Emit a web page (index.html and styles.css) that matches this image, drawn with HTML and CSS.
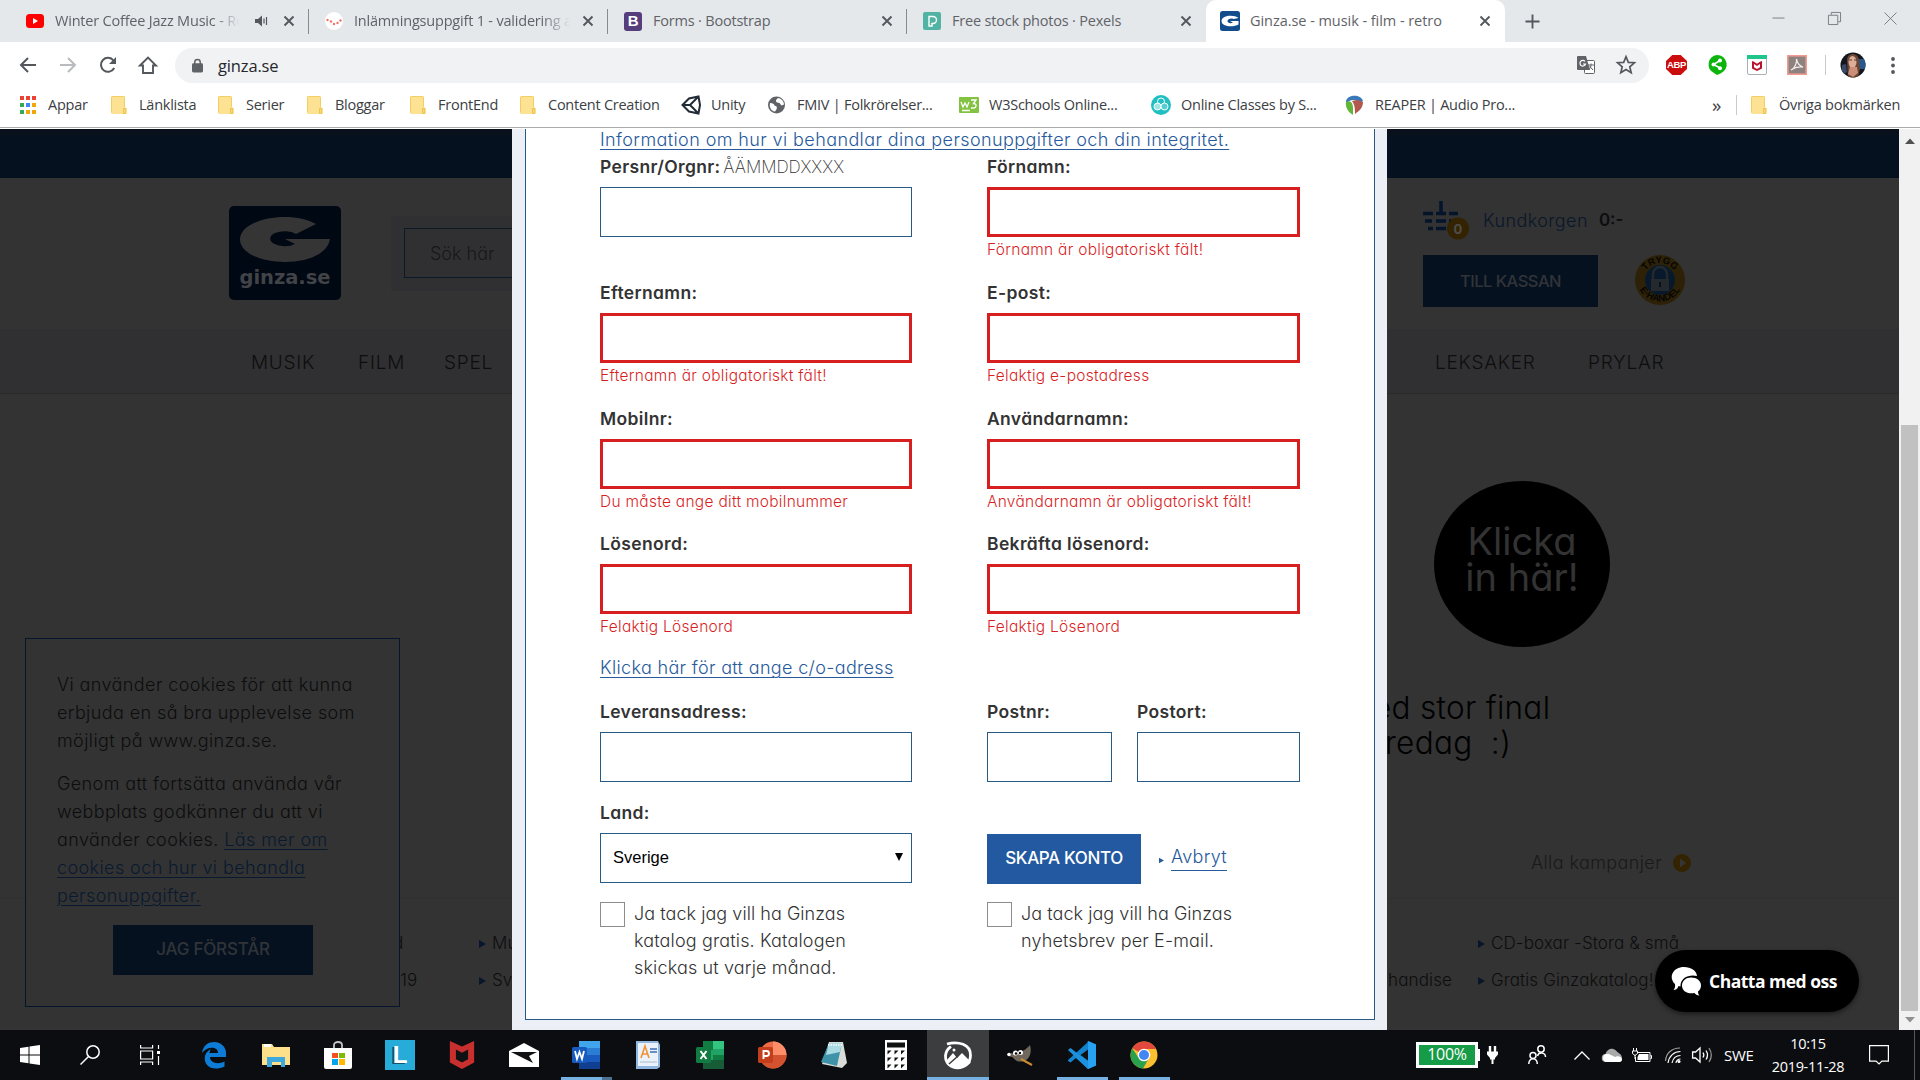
FILE: index.html
```html
<!DOCTYPE html>
<html lang="sv">
<head>
<meta charset="utf-8">
<title>Ginza.se - musik - film - retro</title>
<link rel="stylesheet" href="styles.css">
</head>
<body>
<svg class="defs" width="0" height="0">
  <symbol id="folder" viewBox="0 0 16 18"><path d="M1.5 0h11a1.5 1.5 0 0 1 1.500 1.500V11l1.500 1v4.500a1.500 1.500 0 0 1-1.500 1.500H1.500A1.500 1.500 0 0 1 0 16.500v-15A1.500 1.500 0 0 1 1.500 0z" fill="#fde293"/><path d="M.5 16.500V1.500a1 1 0 0 1 1-1h11a1 1 0 0 1 1 1V11" fill="none" stroke="#f3cf63"/><path d="M12.500 17.500v-5h2.500v5z" fill="#f9d86f" stroke="#e8bf45" stroke-width=".8"/></symbol>
  <symbol id="x" viewBox="0 0 12 12"><path d="M1.500 1.500l9 9M10.500 1.500l-9 9" stroke="#54585d" stroke-width="1.900"/></symbol>
  <symbol id="tri" viewBox="0 0 7 8"><path d="M0 0l7 4-7 4z" fill="currentColor"/></symbol>
</svg>

<header class="tabs">
  <div class="tab">
    <svg class="fav" viewBox="0 0 18 18"><rect y="2" width="18" height="14" rx="3.500" fill="#f00"/><path d="M7 6l5 3-5 3z" fill="#fff"/></svg>
    <span class="title fade">Winter Coffee Jazz Music - Re</span>
    <svg class="audio" viewBox="0 0 14 12"><path d="M0 4h3l4-3.500v11L3 8H0z" fill="#54585d"/><path d="M9 3.500v5M11.500 2v8" stroke="#54585d" stroke-width="1.200"/></svg>
    <svg class="close"><use href="#x"/></svg>
  </div>
  <div class="tab">
    <svg class="fav" viewBox="0 0 18 18"><circle cx="9" cy="9" r="9" fill="#fff"/><g fill="#f0736a"><circle cx="2.500" cy="8" r="1.200"/><circle cx="6" cy="9.500" r="1.200"/><circle cx="9" cy="12" r="1.200"/><circle cx="12.500" cy="11" r="1.200"/><circle cx="15.500" cy="8.500" r="1.200"/></g></svg>
    <span class="title fade">Inlämningsuppgift 1 - validering a</span>
    <svg class="close"><use href="#x"/></svg>
  </div>
  <div class="tab">
    <span class="fav boot">B</span>
    <span class="title">Forms · Bootstrap</span>
    <svg class="close"><use href="#x"/></svg>
  </div>
  <div class="tab last">
    <svg class="fav" viewBox="0 0 18 18"><rect width="18" height="18" rx="2" fill="#51b3a3"/><path d="M6 14V4.500h4a3 3 0 0 1 0 7H9V14z" fill="none" stroke="#fff" stroke-width="1.400"/></svg>
    <span class="title">Free stock photos · Pexels</span>
    <svg class="close"><use href="#x"/></svg>
  </div>
  <div class="tab active">
    <svg class="fav" viewBox="0 0 20 20"><rect width="20" height="20" rx="2.500" fill="#124c8c"/><path d="M18.500 7C14 3.500 2 4 1.500 10c0 6 12 6.500 17 3.500V10H10l3 1.500c-2.500 1.500-5.500.5-5.500-1.500s3.500-3 6-2z" fill="#fff"/></svg>
    <span class="title">Ginza.se - musik - film - retro</span>
    <svg class="close"><use href="#x"/></svg>
  </div>
  <svg class="newtab" viewBox="0 0 16 16"><path d="M8 .5v15M.5 8h15" stroke="#54585d" stroke-width="2"/></svg>
  <div class="winbtns">
    <svg viewBox="0 0 14 14"><path d="M.5 6.500h13" stroke="#75797d"/></svg>
    <svg viewBox="0 0 14 14"><path d="M.5 3.500h10v10H.5zM3.500 3V.5h10v10H11" fill="none" stroke="#75797d"/></svg>
    <svg viewBox="0 0 14 14"><path d="M.5.5l13 13M13.500.5l-13 13" stroke="#75797d"/></svg>
  </div>
</header>

<nav class="toolbar">
  <svg viewBox="0 0 18 18"><path d="M17 9H2M9 2L2 9l7 7" fill="none" stroke="#54585d" stroke-width="2"/></svg>
  <svg viewBox="0 0 18 18"><path d="M1 9h15M9 2l7 7-7 7" fill="none" stroke="#b9bbbe" stroke-width="2"/></svg>
  <svg viewBox="0 0 18 18"><path d="M15.200 12A7 7 0 1 1 14.500 4.500" fill="none" stroke="#54585d" stroke-width="2"/><path d="M17 1v7h-7z" fill="#54585d"/></svg>
  <svg viewBox="0 0 18 18"><path d="M1 9.500L9 1.500l8 8H14V17H4V9.500z" fill="none" stroke="#54585d" stroke-width="1.900"/></svg>
  <div class="omnibox">
    <svg class="lock" viewBox="0 0 12 15"><rect y="5" width="12" height="10" rx="1.500" fill="#5f6368"/><path d="M3 6V4a3 3 0 0 1 6 0v2" fill="none" stroke="#5f6368" stroke-width="1.600"/></svg>
    <span class="url">ginza.se</span>
    <svg class="tr" viewBox="0 0 18 18"><rect x="7.500" y="4.500" width="10" height="13" rx="1" fill="#fff" stroke="#5f6368"/><path d="M1 0h8l4 14H1a1 1 0 0 1-1-1V1a1 1 0 0 1 1-1z" fill="#5f6368"/><path d="M8 5.500A2.800 2.800 0 1 0 8.500 8H6" fill="none" stroke="#fff" stroke-width="1.200"/><path d="M11 9h6M14 7.500V9c0 2-1.500 4-2.500 5M12.500 10l3.500 4" stroke="#5f6368" fill="none"/></svg>
    <svg class="star" viewBox="0 0 18 18"><path d="M9 1.500l2.100 5.100 5.500.4-4.200 3.600 1.300 5.400L9 13.100 4.300 16l1.300-5.400L1.400 7l5.500-.4z" fill="none" stroke="#54585d" stroke-width="1.500"/></svg>
  </div>
  <div class="exts">
    <span class="abp">ABP</span>
    <svg viewBox="0 0 20 20"><path d="M10 0a9.500 9.500 0 0 1 4 18.200L10 20l-3-2A9.500 9.500 0 0 1 10 0z" fill="#0db40d"/><path d="M13 5.500L6.500 9.500 13 13" fill="none" stroke="#fff" stroke-width="1.500"/><g fill="#fff"><circle cx="13" cy="5.500" r="2"/><circle cx="6.500" cy="9.500" r="2"/><circle cx="13" cy="13.200" r="2"/></g></svg>
    <svg viewBox="0 0 20 20"><rect x=".5" y=".5" width="19" height="19" rx="1.500" fill="#fff" stroke="#a9b0b3"/><path d="M0 0h20v4H0z" fill="#1fc58a"/><path d="M5 6l2 .8v5.500l3 1.700 3-1.700V6.800L15 6v7.500L10 16l-5-2.500z" fill="#b8142c"/><path d="M7 6.800l3 2 3-2V9l-3 2-3-2z" fill="#b8142c"/></svg>
    <svg viewBox="0 0 20 20"><rect x=".8" y=".8" width="18.400" height="18.400" fill="#8c8280" stroke="#f09a90" stroke-width="1.600"/><path d="M4 15c4-2 6-7 5.500-11 1 5 3 7 6.500 8-5-.5-8 0-12 3z" fill="none" stroke="#f2e7e5" stroke-width="1.300"/></svg>
  </div>
  <i class="vsep"></i>
  <svg class="avatar" viewBox="0 0 26 26"><clipPath id="av"><circle cx="13" cy="13" r="12.500"/></clipPath><g clip-path="url(#av)"><path d="M0 0h26v26H0z" fill="#14171d"/><path d="M18 7h8v10h-7z" fill="#27588e"/><path d="M7 8c0-8 11-8 12 0l1 8-2 10H8z" fill="#6b4634"/><ellipse cx="12.500" cy="10" rx="4" ry="6" fill="#dcae98"/><path d="M9 8h3M14 8h3" stroke="#5b3a2c"/><path d="M10 15h7l1 6-5 4-5-3z" fill="#c98f78"/><path d="M2 13l4-1 1 8-5 3z" fill="#394a68"/></g></svg>
  <svg class="dots" viewBox="0 0 6 18"><g fill="#54585d"><circle cx="3" cy="2.500" r="1.900"/><circle cx="3" cy="9" r="1.900"/><circle cx="3" cy="15.500" r="1.900"/></g></svg>
</nav>

<nav class="bookmarks">
  <a><svg viewBox="0 0 16 18"><g><path d="M0 0h4v4H0zM6 0h4v4H6zM12 0h4v4h-4z" fill="#ea4335"/><path d="M0 7h4v4H0z" fill="#34a853"/><path d="M6 7h4v4H6z" fill="#4285f4"/><path d="M12 7h4v4h-4zM12 14h4v4h-4zM6 14h4v4H6z" fill="#f2a60c"/><path d="M0 14h4v4H0z" fill="#34a853"/></g></svg>Appar</a>
  <a><svg><use href="#folder"/></svg>Länklista</a>
  <a><svg><use href="#folder"/></svg>Serier</a>
  <a><svg><use href="#folder"/></svg>Bloggar</a>
  <a><svg><use href="#folder"/></svg>FrontEnd</a>
  <a><svg><use href="#folder"/></svg>Content Creation</a>
  <a class="wide"><svg viewBox="0 0 20 20"><path d="M1.500 10L8 3.500 17.500 1.500 19 10l-1.500 8.500L8 16.500zM9 10H1.500M9 10l7.500-7.500M9 10l7.500 7.500" fill="none" stroke="#222c37" stroke-width="2"/></svg>Unity</a>
  <a class="wide"><svg viewBox="0 0 20 20"><circle cx="9.500" cy="10" r="8.500" fill="#5f6368"/><path d="M3 8c3 0 4 1 5 3 2 0 3 2 0 5.500C4 16 2 12 3 8zM11 3c-2 1.500-3 3-1 4.500l2.500.5 2 2.500 2.500-1c0-3-2.500-6-6-6.500z" fill="#fff"/></svg>FMIV | Folkrörelser...</a>
  <a class="wide"><svg viewBox="0 0 20 20"><rect y="2" width="20" height="16" rx="1" fill="#83c341"/><path d="M2 7l2 5 2-4 2 4 2-5M12 5h5l-2.500 3.500c4 0 3 5-.5 4.500h-2M3 15.500h8" fill="none" stroke="#fff" stroke-width="1.300"/></svg>W3Schools Online...</a>
  <a class="wide"><svg viewBox="0 0 20 20"><circle cx="10" cy="10" r="10" fill="#21bfc2"/><g fill="none" stroke="#fff" stroke-width="1"><circle cx="10" cy="6.500" r="3.500" fill="#21bfc2"/><circle cx="6.500" cy="11.500" r="3.500" fill="#9fe5e6"/><circle cx="13.500" cy="11.500" r="3.500" fill="#55d0d2"/></g></svg>Online Classes by S...</a>
  <a class="wide"><svg viewBox="0 0 20 20"><path d="M1 6c2-7 15-7 17 0l-4 2C11 4 6 4 1 8z" fill="#3a78b8"/><path d="M1 7c4-2 7 1 7 6v7C3 17 0 12 1 7z" fill="#62b53a"/><path d="M7 6c4-1 8-1 11 1 0 6-4 9-8 12 0-5 0-9-3-13z" fill="#b2584e"/></svg>REAPER | Audio Pro...</a>
  <span class="more">»</span>
  <a><svg><use href="#folder"/></svg>Övriga bokmärken</a>
</nav>

<div class="view">
  <main class="page">
    <div class="topbar"></div>
    <div class="head">
      <svg class="logo" viewBox="0 0 112 94"><rect width="112" height="94" rx="5" fill="#000814"/><path d="M87 18L67 28A14.500 7.500 0 1 0 66 38L56 33H101C99 47 80 56 56 56 30 56 11 46 11 33.500S30 11 56 11C68 11 79 13.500 87 18z" fill="#353535"/><text x="10.500" y="78" textLength="91" class="logotext">ginza.se</text></svg>
      <div class="search"><div class="searchbox">Sök här</div></div>
      <div class="cart">
        <div class="cartrow">
          <svg class="basket" viewBox="0 0 48 40"><g stroke="#04142b" stroke-width="3.500" fill="none"><path d="M18 0v12M0 12.500h10M13 12.500h10M26 12.500h9M2 20h7M13 20h10M26 20h8M5 27.500h5M13 27.500h10M26 27.500h5"/></g><circle cx="35" cy="27.500" r="11" fill="#342300"/><text x="35" y="32.500" class="badge">0</text></svg>
          <span class="basketname">Kundkorgen</span><b>0:-</b>
        </div>
        <div class="cartrow two">
          <div class="kassan">TILL KASSAN</div>
          <svg class="seal" viewBox="0 0 50 50"><defs><path id="arcTop" d="M8 25a17 17 0 0 1 34 0"/><path id="arcBot" d="M1.500 23a23.500 23.500 0 0 0 47 0"/></defs><circle cx="25" cy="25" r="25" fill="#2d2207"/><circle cx="25" cy="25" r="15" fill="#07192b"/><text class="sealtext"><textPath href="#arcTop" startOffset="50%">TRYGG</textPath></text><text class="sealtext"><textPath href="#arcBot" startOffset="50%">E·HANDEL</textPath></text><path d="M16 24h18v12H16z" fill="#24292d"/><path d="M18 24v-5a7 7 0 0 1 14 0v5" fill="none" stroke="#24292d" stroke-width="2.500"/><path d="M25 27v5" stroke="#07101a" stroke-width="2"/></svg>
        </div>
      </div>
    </div>
    <div class="menu"><span>MUSIK</span><span>FILM</span><span>SPEL</span><span class="leks">LEKSAKER</span><span>PRYLAR</span></div>
    <div class="promo">
      <div class="disc"><span class="k1">Klicka</span><span class="k2">in här!</span></div>
      <div class="final"><span class="f1">ed stor final</span><span class="f2">redag&nbsp; :)</span></div>
      <div class="kamp">Alla kampanjer<svg viewBox="0 0 18 18"><circle cx="9" cy="9" r="9" fill="#342300"/><path d="M7 4.500l6 4.500-6 4.500z" fill="#353535"/></svg></div>
    </div>
    <div class="links">
      <span class="t">d</span><span><svg><use href="#tri"/></svg>Mu</span><span></span><span class="g"><svg><use href="#tri"/></svg>CD-boxar -Stora &amp; små</span>
      <span class="t">2019</span><span><svg><use href="#tri"/></svg>Sve</span><span class="r">handise</span><span class="h"><svg><use href="#tri"/></svg>Gratis Ginzakatalog!</span>
    </div>
  </main>

  <aside class="cookie">
    <p>Vi använder cookies för att kunna<br>erbjuda en så bra upplevelse som<br>möjligt på www.ginza.se.</p>
    <p>Genom att fortsätta använda vår<br>webbplats godkänner du att vi<br>använder cookies. <u>Läs mer om<br>cookies och hur vi behandla<br>personuppgifter.</u></p>
    <div class="ok">JAG FÖRSTÅR</div>
  </aside>

  <section class="modal">
    <form class="panel">
      <a class="link top">Information om hur vi behandlar dina personuppgifter och din integritet.</a>
      <div class="grid">
        <div class="field"><label>Persnr/Orgnr: <em>ÅÄMMDDXXXX</em></label><div class="input"></div></div>
        <div class="field bad"><label>Förnamn:</label><div class="input"></div><p>Förnamn är obligatoriskt fält!</p></div>
        <div class="field bad"><label>Efternamn:</label><div class="input"></div><p>Efternamn är obligatoriskt fält!</p></div>
        <div class="field bad"><label>E-post:</label><div class="input"></div><p>Felaktig e-postadress</p></div>
        <div class="field bad"><label>Mobilnr:</label><div class="input"></div><p>Du måste ange ditt mobilnummer</p></div>
        <div class="field bad"><label>Användarnamn:</label><div class="input"></div><p>Användarnamn är obligatoriskt fält!</p></div>
        <div class="field bad"><label>Lösenord:</label><div class="input"></div><p>Felaktig Lösenord</p></div>
        <div class="field bad"><label>Bekräfta lösenord:</label><div class="input"></div><p>Felaktig Lösenord</p></div>
      </div>
      <a class="link co">Klicka här för att ange c/o-adress</a>
      <div class="grid low">
        <div class="field"><label>Leveransadress:</label><div class="input"></div></div>
        <div class="post">
          <div class="field"><label>Postnr:</label><div class="input"></div></div>
          <div class="field"><label>Postort:</label><div class="input"></div></div>
        </div>
        <div class="field"><label>Land:</label><div class="input select"><span>Sverige</span><svg viewBox="0 0 8 8"><path d="M0 0h8L4 8z"/></svg></div></div>
        <div class="actions"><div class="create">SKAPA KONTO</div><svg><use href="#tri"/></svg><a>Avbryt</a></div>
      </div>
      <div class="grid">
        <div class="check"><i></i><span>Ja tack jag vill ha Ginzas<br>katalog gratis. Katalogen<br>skickas ut varje månad.</span></div>
        <div class="check"><i></i><span>Ja tack jag vill ha Ginzas<br>nyhetsbrev per E-mail.</span></div>
      </div>
    </form>
  </section>

  <div class="chat"><svg viewBox="0 0 30 29"><path d="M13 0c7 0 12.500 3.500 13 9-8-2-17 2-16.500 10.500l-2-.5c-1 3-3 4-5 4 1-1 2-3 1.500-6C-3 10 2 0 13 0z" fill="#fff"/><path d="M20 10.500c6 0 10 3.500 10 8 0 3-1.500 5-3 6 0 2 .5 3 1.500 4-2.500 0-4-1-5-2.500-7 1.500-12.500-2-12.500-7.500 0-4.500 4-8 9-8z" fill="#fff"/></svg>Chatta med oss</div>

  <div class="scroll"><svg viewBox="0 0 10 6"><path d="M0 6l5-5.500L10 6z" fill="#505050"/></svg><i></i><svg viewBox="0 0 10 6"><path d="M0 0l5 5.500L10 0z" fill="#8f8f8f"/></svg></div>
</div>

<footer class="taskbar">
  <div class="apps">
    <span><svg viewBox="0 0 20 20"><path d="M0 3l8.500-1.300v7.800H0zM9.500 1.500L20 0v9.500H9.500zM0 10.500h8.500v7.800L0 17zM9.500 10.500H20V20L9.500 18.500z" fill="#fff"/></svg></span>
    <span><svg viewBox="0 0 20 20"><circle cx="13" cy="7" r="6.200" fill="none" stroke="#fff" stroke-width="1.500"/><path d="M8.500 11.500L.5 19.500" stroke="#fff" stroke-width="1.500"/></svg></span>
    <span><svg class="tview" viewBox="0 0 20 20"><path d="M.6 0v3h12V0M.6 6h12v8H.6zM.6 20v-3h12v3M18.500 0v4M18.500 11v9" fill="none" stroke="#fff" stroke-width="1.200"/><path d="M17 6h3v3h-3z" fill="#fff"/></svg></span>
    <span><svg class="big" viewBox="0 0 28 28"><path d="M2 12C3 4 9 1 14 1c8 0 12 6 12 11v4H10c0 6 8 8 14.500 4.500v5C13 31 3 25 5 15c1-4 4-6 6-7-1 1-1.500 3-1.500 4H18c0-7-11-7-16 0z" fill="#0c7cd6"/></svg></span>
    <span><svg class="big" viewBox="0 0 28 28"><path d="M0 3h10l2 3h16v18H0z" fill="#ffe08a"/><path d="M2 3h7v3H2z" fill="#fff"/><path d="M5 26V16h18v10h-4v-5h-9v5z" fill="#3fa9dd"/></svg></span>
    <span><svg class="big" viewBox="0 0 28 28"><path d="M10 8V4c0-4 8-4 8 0v4" fill="none" stroke="#bfc3c9" stroke-width="1.800"/><path d="M0 7h28v19a2 2 0 0 1-2 2H2a2 2 0 0 1-2-2z" fill="#fff"/><path d="M8 12h6v5H8z" fill="#f25022"/><path d="M15 12h6v5h-6z" fill="#7fba00"/><path d="M8 18h6v6H8z" fill="#00a4ef"/><path d="M15 18h6v6h-6z" fill="#ffb900"/></svg></span>
    <span><i class="lapp">L</i></span>
    <span><svg class="big" viewBox="0 0 28 30"><path d="M1 0l13 6L27 0v23l-13 7-13-7z" fill="#c8302f"/><path d="M7.500 9l6.500 3.500L20.500 9v10.500L14 23l-6.500-3.500z" fill="#101113"/></svg></span>
    <span><svg class="mail" viewBox="0 0 30 24"><path d="M0 8L15 0l15 8v16H0z" fill="#fff"/><path d="M2 9h26l-8 4 4 7L2 9z" fill="#101113"/></svg></span>
    <span class="run part"><svg class="big" viewBox="0 0 28 28"><path d="M7 0h19a2 2 0 0 1 2 2v24a2 2 0 0 1-2 2H7z" fill="#2b7cd3"/><path d="M7 0h21v7H7z" fill="#41a5ee"/><path d="M7 14h21v7H7z" fill="#185abd"/><path d="M7 21h21v7H7z" fill="#103f91"/><rect y="6" width="15" height="16" rx="1.500" fill="#185abd"/><path d="M3 10l2 8 2.500-7 2.500 7 2-8" fill="none" stroke="#fff" stroke-width="1.800"/></svg></span>
    <span><svg class="big" viewBox="0 0 28 28"><path d="M2 0h22l2 4v22l-3 2H2z" fill="#8fb7e0"/><path d="M4 2h20v23H4z" fill="#eaf3fb"/><path d="M7 17l4-12 4 12M8.500 13h5" fill="none" stroke="#f29232" stroke-width="1.600"/><path d="M16 8h7M16 11h7" stroke="#3c6fb5" stroke-width="1.500"/><path d="M6 21h17" stroke="#a8bacb"/></svg></span>
    <span><svg class="big" viewBox="0 0 28 28"><path d="M7 0h21v28H7z" fill="#21a366"/><path d="M7 0h10v9H7zM17 14h11v7H17z" fill="#107c41"/><path d="M17 0h11v8H17z" fill="#33c481"/><path d="M7 19h21v9H7z" fill="#185c37"/><rect y="6" width="15" height="16" rx="1.500" fill="#107c41"/><path d="M4.500 10l6 8M10.500 10l-6 8" stroke="#fff" stroke-width="2"/></svg></span>
    <span><svg class="big" viewBox="0 0 28 28"><circle cx="15" cy="14" r="13.500" fill="#ed6c47"/><path d="M15 .5A13.500 13.500 0 0 1 28.500 14H15z" fill="#ff8f6b"/><path d="M1.500 14h27a13.500 13.500 0 0 1-27 0z" fill="#d35230"/><rect y="6" width="15" height="16" rx="1.500" fill="#c43e1c"/><path d="M5.500 18v-8h3a2.500 2.500 0 0 1 0 5h-3" fill="none" stroke="#fff" stroke-width="1.900"/></svg></span>
    <span><svg class="big" viewBox="0 0 28 28"><path d="M9 1h14l4 21-5 5-20-4z" fill="#d9dcd8"/><path d="M9 2h13l-5 23L1 21z" fill="#3f93a9"/><path d="M9 2h13l-2 9-14 3z" fill="#a9dbe3"/><path d="M8 4h14" stroke="#e9f3f4" stroke-width="2" stroke-dasharray="1.500 1"/></svg></span>
    <span><svg class="calc" viewBox="0 0 22 30"><path d="M0 0h22v30H0z" fill="#fff"/><path d="M2 2.500h18v5H2z" fill="#101113"/><g fill="#101113"><path d="M2.500 10.500h4l-4 4zM9.500 10.500h4l-4 4zM16 10.500h4l-4 4zM2.500 17.500h4l-4 4zM9.500 17.500h4l-4 4zM16 17.500h4l-4 4zM2.500 24.500h4l-4 4zM9.500 24.500h4l-4 4zM16 24.500h4l-4 4z"/></g></svg></span>
    <span class="current"><svg class="big" viewBox="0 0 28 28"><path d="M3 3C14 0 27 3 26.500 14.500 26 31 1 31 1.500 14.500 2 9 5 7 7 5.500" fill="none" stroke="#fff" stroke-width="2.800"/><path d="M3 19l6-7 4 5 5-5 9 9c-6 9-20 7-24-2z" fill="#fff"/><path d="M5 23l9-8" stroke="#3c3d3f" stroke-width="1.500"/><circle cx="10" cy="9" r="1.500" fill="#fff"/></svg></span>
    <span><svg class="big" viewBox="0 0 28 28"><path d="M24 4c2 7 0 14-6 16-4 1.500-9 0-11-3.500L3 15l2-3c6 1 13-1 19-8z" fill="#6f675c"/><circle cx="9.500" cy="12" r="2.500" fill="#fff"/><circle cx="14.500" cy="11.500" r="2.500" fill="#fff"/><circle cx="10" cy="12.500" r="1.200"/><circle cx="14" cy="12" r="1.200"/><circle cx="3" cy="13.500" r="1.800" fill="#fff"/><path d="M15 18l11 6" stroke="#c98c2f" stroke-width="2"/></svg></span>
    <span class="run"><svg class="big" viewBox="0 0 28 28"><path d="M20 0l8 3.500v21L20 28 8 17l-5.500 4.500L0 20V19L19 2z" fill="#1284cf"/><path d="M20 0l8 3.500v21L20 28z" fill="#27a2f0"/><path d="M0 9l2.500-2L20 20.500V28z" fill="#1c92dd"/><path d="M20 8.500v11L12.500 14z" fill="#101113"/><path d="M0 10.500V17.500L4.500 14z" fill="#101113"/></svg></span>
    <span class="run"><svg class="big" viewBox="0 0 28 28"><circle cx="14" cy="14" r="13.500" fill="#fbc02f"/><path d="M14 14L2.300 7.200A13.500 13.500 0 0 1 25.700 7.300L26 8H14z" fill="#e2483c"/><path d="M2.300 7.200A13.500 13.500 0 0 0 13 27.500l6-10.500L14 14 8 16z" fill="#2aa14c"/><circle cx="14" cy="14" r="6.300" fill="#fff"/><circle cx="14" cy="14" r="5" fill="#4486f4"/></svg></span>
  </div>
  <div class="tray">
    <div class="batt">100%</div>
    <svg class="plug" viewBox="0 0 11 18"><path d="M3 0v6M8 0v6" stroke="#fff" stroke-width="2.400"/><path d="M0 5.500h11v3L8 12v1.500H3V12L0 8.500z" fill="#fff"/><path d="M5.500 12v6" stroke="#fff" stroke-width="2"/></svg>
    <svg class="people" viewBox="0 0 18 20"><g fill="none" stroke="#fff" stroke-width="1.500"><circle cx="13" cy="4" r="3.200"/><circle cx="5" cy="10.500" r="3"/><path d="M.8 19c0-7 8.500-7 8.500 0M9.500 11c1-4 8-4 8 1"/></g></svg>
    <svg class="chev" viewBox="0 0 16 9"><path d="M.5 8.500L8 1l7.500 7.500" fill="none" stroke="#fff" stroke-width="1.300"/></svg>
    <svg class="cloud" viewBox="0 0 20 14"><path d="M4 14a4 4 0 0 1-.5-8C5 1 10-1 14 2.500 16 5 20 6 20 10s-3 4-4 4z" fill="#a9a9a9"/><path d="M5 14a4 4 0 0 1 0-8c4 0 5 2 8 3 3-2 7 0 7 2.500 0 1.500-1 2.500-2.500 2.500z" fill="#fff"/></svg>
    <svg class="pow" viewBox="0 0 20 14"><path d="M5.500 4.500h12.500v9H3.500V9" fill="none" stroke="#fff"/><path d="M7 6h9.500v6H5.500V9z" fill="#fff"/><path d="M18.500 7.500h1v3h-1M1.500 0v3M4.500 0v3M.5 3h5v2.500L3 7.500.5 5.500zM3 7v4" fill="none" stroke="#fff"/></svg>
    <svg class="wifi" viewBox="0 0 16 16"><g fill="none" stroke="#fff" stroke-width="1.200"><path d="M.5 14C1 6 7 1 15 1" opacity=".6"/><path d="M3 16C4 9 9 4.500 15.500 4.500M7 16c1-5 4-7.500 8.500-7.500M11 16c0-2 2-4 4.500-4"/></g><circle cx="14" cy="14.500" r="1.500" fill="#fff"/></svg>
    <svg class="spk" viewBox="0 0 20 18"><g fill="none" stroke="#fff" stroke-width="1.300"><path d="M.6 6h3L8 2v14l-4.400-4h-3z"/><path d="M11 6.500c1 1.500 1 3.500 0 5M14 4.500c2 3 2 6 0 9"/><path d="M17 2c3 4.500 3 9.500 0 14" opacity=".55"/></g></svg>
    <span class="lang">SWE</span>
    <div class="clock"><span>10:15</span><span>2019-11-28</span></div>
    <svg class="note" viewBox="0 0 20 20"><path d="M.6.6h18.800v15.500h-6.500L10 19l-2.900-2.900H.6z" fill="none" stroke="#fff" stroke-width="1.200"/></svg>
    <i class="peek"></i>
  </div>
</footer>
</body>
</html>
```
FILE: styles.css
```css
* { box-sizing: border-box; }
body { margin: 0; width: 1920px; height: 1080px; overflow: hidden; display: flex; flex-direction: column; background: #fff; font-family: "Open Sans", sans-serif; }
svg { display: block; flex: none; overflow: visible; }
p { margin: 0; }
i, em { font-style: normal; }
.defs { position: absolute; }

/* browser tabs */
.tabs { height: 42px; flex: none; background: #e5e8eb; display: flex; align-items: center; padding-left: 10px; font-size: 14.5px; letter-spacing: -.2px; color: #5f6368; }
.tab { width: 299px; height: 42px; display: flex; align-items: center; padding: 0 14px 0 16px; position: relative; }
.tab:not(.active):not(.last)::after { content: ""; position: absolute; right: 0; top: 9px; width: 1px; height: 25px; background: #868b90; }
.tab.active { background: #fff; border-radius: 10px 10px 0 0; padding-left: 14px; letter-spacing: -.05px; }
.fav { width: 18px; height: 18px; margin-right: 11px; flex: none; }
.active .fav { width: 20px; height: 20px; margin-right: 10px; }
.boot { background: #563d7c; color: #fff; border-radius: 3px; font: bold 15px/18px "Liberation Sans", sans-serif; text-align: center; height: 19px; }
.title { flex: 1; white-space: nowrap; overflow: hidden; padding-bottom: 1px; }
.fade { -webkit-mask-image: linear-gradient(90deg, #000 84%, transparent 97%); mask-image: linear-gradient(90deg, #000 84%, transparent 97%); }
.audio { width: 14px; height: 12px; margin: 0 14px 0 10px; }
.close { width: 12px; height: 12px; margin-left: 5px; }
.audio + .close { margin-left: 0; }
.newtab { width: 15px; height: 15px; margin-left: 20px; }
.winbtns { margin-left: auto; display: flex; gap: 43px; margin-right: 23px; }
.winbtns svg { width: 13px; height: 13px; margin-top: -6px; }

/* toolbar */
.toolbar { height: 44px; flex: none; display: flex; align-items: center; padding: 2px 24px 0 19px; }
.toolbar > svg { width: 18px; height: 18px; margin-right: 22px; }
.omnibox { width: 1474px; height: 35px; margin-left: -4px; border-radius: 18px; background: #f0f2f4; display: flex; align-items: center; padding: 0 13px 0 17px; }
.lock { width: 11px; height: 15px; }
.url { font-size: 16.5px; letter-spacing: -.15px; color: #26282b; margin-left: 15px; flex: 1; }
.tr { width: 18px; height: 18px; margin-right: 21px; }
.star { width: 20px; height: 20px; }
.exts { display: flex; align-items: center; gap: 20px; margin-left: 17px; }
.exts svg { width: 20px; height: 20px; }
.abp { width: 21px; height: 20px; background: #cc0d0d; color: #fff; font: bold 9.5px/20px "Liberation Sans", sans-serif; text-align: center; letter-spacing: -.3px; clip-path: polygon(30% 0, 70% 0, 100% 30%, 100% 70%, 70% 100%, 30% 100%, 0 70%, 0 30%); }
.vsep { width: 1px; height: 20px; background: #c8cbce; margin: 0 14px 0 18px; }
.toolbar > .avatar { width: 26px; height: 26px; margin-right: 24px; }
.toolbar > .dots { width: 6px; height: 19px; margin: 0; }

/* bookmarks */
.bookmarks { height: 43px; flex: none; display: grid; grid-template-columns: 91px 107px 89px 103px 110px 161px 86px 192px 192px 194px 367px 39px 160px; align-items: center; padding: 0 0 6px 20px; font-size: 14.5px; letter-spacing: -.25px; color: #3c4043; white-space: nowrap; background: linear-gradient(#a9abad, #a9abad) 0 41px / 100% 1px no-repeat; }
.bookmarks a { display: flex; align-items: center; gap: 12px; }
.bookmarks a svg { width: 16px; height: 18px; }
.bookmarks a.wide { gap: 10px; }
.bookmarks a.wide svg { width: 20px; height: 20px; }
.more { font-size: 19px; line-height: 20px; border-right: 1px solid #c8cbce; width: 25px; }

/* dimmed shop page */
.view { height: 901px; flex: none; position: relative; overflow: hidden; }
.page { width: 1899px; height: 901px; background: #333; font-family: Inter, sans-serif; font-weight: 300; font-feature-settings: "cv11"; color: #0d0d0e; display: flex; flex-direction: column; }
.topbar { height: 49px; background: linear-gradient(#0b101b, #06111f 8px); }
.head { height: 151px; display: flex; padding-left: 229px; }
.logo { width: 112px; height: 94px; margin-top: 28px; }
.logotext { font: bold 19.5px "DejaVu Sans", sans-serif; fill: #414347; }
.search { width: 300px; height: 75px; margin: 38px 0 0 50px; background: #303033; padding: 12px 13px; }
.searchbox { height: 50px; border: 1px solid #0c1929; padding-left: 25px; line-height: 49px; font-size: 18px; color: #171717; }
.cart { margin-left: 732px; padding-top: 23px; font-size: 18px; }
.cartrow { display: flex; height: 54px; align-items: flex-start; }
.basket { width: 48px; height: 40px; }
.badge { font: bold 13px Inter, sans-serif; fill: #4d4d4d; text-anchor: middle; }
.basketname { color: #09172b; margin: 9px 11px 0 12px; letter-spacing: .4px; }
.cartrow b { margin-top: 9px; font-weight: 600; font-size: 17px; }
.kassan { width: 175px; height: 52px; background: #06111f; color: #303439; line-height: 53px; text-align: center; font-size: 16.5px; font-weight: 500; letter-spacing: -.5px; }
.seal { width: 50px; height: 50px; margin-left: 37px; }
.sealtext { font: bold 9.5px "Liberation Sans", sans-serif; fill: #060503; text-anchor: middle; }
.menu { height: 65px; background: #303032; border-bottom: 1px solid #292a2c; display: flex; padding-left: 251px; font-size: 19px; line-height: 68px; letter-spacing: .75px; }
.menu span:nth-child(1) { width: 107px; }
.menu span:nth-child(2) { width: 86px; }
.menu span:nth-child(3) { width: 991px; }
.menu .leks { width: 153px; }
.promo { height: 505px; border-bottom: 1px solid #303030; }
.disc { width: 176px; height: 166px; margin: 87px 0 0 1434px; background: #000; border-radius: 50%; color: #333; font-size: 38px; font-weight: 400; line-height: 36px; padding-top: 42px; text-align: center; display: flex; flex-direction: column; }
.final { margin: 43px 0 0 1373px; color: #000; font-size: 31.5px; line-height: 35px; font-weight: 300; letter-spacing: .3px; display: flex; flex-direction: column; white-space: nowrap; }
.f2 { padding-left: 12px; }
.kamp { display: flex; align-items: center; margin: 92px 0 0 1531px; font-size: 18px; letter-spacing: .4px; color: #191919; gap: 11px; }
.kamp svg { width: 18px; height: 18px; }
.links { display: grid; grid-template-columns: 479px 700px 292px 1fr; row-gap: 8px; padding-top: 30px; font-size: 17px; letter-spacing: .12px; line-height: 29px; }
.links span { display: flex; align-items: center; }
.links svg { width: 7px; height: 8px; color: #08162b; margin-right: 6px; }
.links .t { padding-left: 393px; }
.links span:nth-child(5) { padding-left: 379px; }
.links .r { justify-content: flex-end; padding-right: 19px; }
.links .g, .links .h { padding-left: 7px; }

.cookie { position: absolute; left: 25px; top: 509px; width: 375px; height: 369px; background: #333; border: 1px solid #06152d; padding: 32px 0 0 31px; font: 300 18px/28px Inter, sans-serif; letter-spacing: .4px; font-feature-settings: "cv11"; color: #0d0d0e; white-space: nowrap; }
.cookie p + p { margin-top: 15px; }
.cookie u { color: #091a30; text-decoration-thickness: 1px; text-underline-offset: 3px; }
.ok { width: 200px; height: 50px; margin: 15px 0 0 56px; background: #06111f; color: #303439; text-align: center; line-height: 49px; font-size: 17px; font-weight: 500; letter-spacing: -.2px; }

/* account form */
.modal { position: absolute; left: 512px; top: 0; width: 875px; height: 901px; background: #ecf0f6; padding: 0 12px 10px 13px; }
.panel { height: 891px; background: #fff; border: 1px solid #285a86; border-top: 0; padding-left: 74px; font: 300 18px/26px Inter, sans-serif; font-feature-settings: "cv11"; color: #333; overflow: hidden; }
.link { display: block; width: max-content; color: #265a9c; text-decoration: underline; text-decoration-thickness: 1px; text-underline-offset: 3px; letter-spacing: .4px; }
.top { margin-top: -2px; margin-bottom: -1px; white-space: nowrap; }
.grid { display: grid; grid-template-columns: 312px 313px; column-gap: 75px; }
.field { height: 125.8px; }
.field label { display: block; height: 35px; line-height: 30px; font-size: 17.5px; letter-spacing: .35px; font-weight: 600; white-space: nowrap; }
.field em { font-weight: 200; font-size: 17px; letter-spacing: 0; margin-left: -2px; }
.input { height: 50px; border: 1px solid #285a86; background: #fff; }
.bad .input { border: 3px solid #d81f1f; }
.field p { font-size: 15.5px; letter-spacing: .28px; line-height: 26px; color: #d81f1f; white-space: nowrap; }
.co { line-height: 25px; margin-bottom: 17px; letter-spacing: .34px; }
.low .field { height: 101px; }
.post { display: grid; grid-template-columns: 125px 163px; column-gap: 25px; }
.select { display: flex; align-items: center; justify-content: space-between; padding: 0 8px 2px 12px; font: 16.5px "Liberation Sans", sans-serif; color: #000; }
.select svg { width: 8px; height: 8px; }
.actions { display: flex; padding-top: 36px; }
.create { width: 154px; height: 50px; background: #2259a0; color: #fff; text-align: center; line-height: 49px; font-size: 17px; font-weight: 500; letter-spacing: -.35px; }
.actions svg { width: 5px; height: 7px; margin: 23px 7px 0 18px; color: #265a9c; }
.actions a { height: 37px; line-height: 46px; letter-spacing: .3px; color: #265a9c; border-bottom: 1px solid #265a9c; }
.check { display: flex; gap: 9px; padding-top: 3px; line-height: 27px; letter-spacing: .15px; white-space: nowrap; }
.check span:first-line { letter-spacing: .05px; }
.check i { width: 25px; height: 25px; border: 1px solid #8d8d8d; }
.check span { margin-top: -2px; }

.chat { position: absolute; left: 1655px; top: 821px; width: 204px; height: 62px; border-radius: 31px; background: #000; box-shadow: 0 2px 5px rgba(0,0,0,.5); color: #fff; display: flex; align-items: center; gap: 8px; padding-left: 16px; font-size: 17.5px; font-weight: 700; letter-spacing: -.5px; white-space: nowrap; }
.chat svg { width: 30px; height: 29px; }

.scroll { position: absolute; right: 0; top: 0; width: 21px; height: 901px; background: #f1f1f1; display: flex; flex-direction: column; align-items: center; padding: 9px 0 7px; }
.scroll svg { width: 10px; height: 6px; }
.scroll i { width: 17px; height: 586px; margin: 281px 0 6px; background: #c1c1c1; }

/* taskbar */
.taskbar { height: 50px; flex: none; background: #0c0d10; display: flex; color: #fff; }
.apps { display: grid; grid-template-columns: 60px 60px 63px repeat(16, 62px); width: 1175px; }
.apps span { display: flex; align-items: center; justify-content: center; position: relative; }
.apps svg { width: 20px; height: 20px; }
.apps svg.tview { margin-right: 4px; }
.apps svg.big { width: 28px; height: 28px; }
.apps svg.mail { width: 30px; height: 24px; }
.apps svg.calc { width: 22px; height: 30px; }
.lapp { width: 30px; height: 30px; background: #27acd9; font: bold 24px/29px "Liberation Sans", sans-serif; text-align: center; text-shadow: -2px 1px 0 #12506e; }
.run::after, .current::after { content: ""; position: absolute; left: 6px; right: 5px; bottom: 0; height: 3px; background: #76b1e4; }
.part::after { background: linear-gradient(90deg, #76b1e4 41px, #4d7193 41px); }
.current { background: #3c3d3f; }
.current::after { left: 0; right: 0; }
.tray { display: flex; align-items: center; margin-left: 241px; flex: 1; }
.batt { width: 62px; height: 26px; border: 3px solid #fff; background: #169b47; font-size: 16px; line-height: 19px; text-align: center; letter-spacing: -.3px; position: relative; }
.batt::after { content: ""; position: absolute; right: -5px; top: 4px; width: 2px; height: 12px; background: #fff; }
.plug { width: 11px; height: 18px; margin-left: 9px; }
.people { width: 18px; height: 20px; margin-left: 30px; }
.chev { width: 16px; height: 9px; margin-left: 28px; }
.cloud { width: 20px; height: 14px; margin-left: 12px; }
.pow { width: 20px; height: 14px; margin-left: 10px; }
.wifi { width: 16px; height: 16px; margin-left: 13px; }
.spk { width: 20px; height: 18px; margin-left: 11px; }
.lang { font-size: 15px; letter-spacing: -.3px; margin-left: 12px; width: 32px; }
.clock { width: 80px; margin-left: 12px; display: flex; flex-direction: column; align-items: center; font-size: 14.5px; line-height: 23px; letter-spacing: -.3px; white-space: nowrap; }
.note { width: 20px; height: 20px; margin-left: 21px; }
.peek { width: 1px; height: 50px; background: #55575a; margin-left: 25px; }
```
